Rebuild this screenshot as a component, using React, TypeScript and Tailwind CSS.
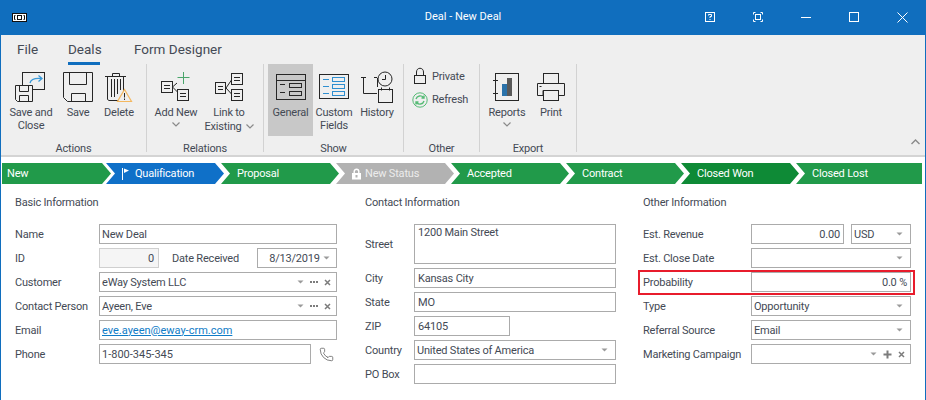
import React from 'react';
import { Phone } from 'lucide-react';

const ink = '#262626';

const Arrow = () => (
  <svg width="7" height="4" viewBox="0 0 7 4" className="shrink-0">
    <path d="M0.5 0.5H6.5L3.5 3.5Z" fill="#9a9a9a" />
  </svg>
);

const Dots = () => (
  <svg width="8" height="2" viewBox="0 0 8 2" className="shrink-0">
    <path d="M0 0h2v2H0zM3 0h2v2H3zM6 0h2v2H6z" fill="#7c7c7c" />
  </svg>
);

const Cross = () => (
  <svg width="7" height="7" viewBox="0 0 7 7" className="shrink-0">
    <path d="M1 1L6 6M6 1L1 6" stroke="#7c7c7c" strokeWidth="1.5" fill="none" />
  </svg>
);

const Plus = () => (
  <svg width="9" height="9" viewBox="0 0 9 9" className="shrink-0">
    <path d="M4.5 0.5V8.5M0.5 4.5H8.5" stroke="#7c7c7c" strokeWidth="2" fill="none" />
  </svg>
);

const Caret = () => (
  <svg width="8" height="5" viewBox="0 0 8 5" className="inline-block">
    <path d="M0.5 0.5L4 4L7.5 0.5" stroke="#8a8a8a" strokeWidth="1.2" fill="none" />
  </svg>
);

const Box = ({ className = 'flex-1', bg = 'bg-white border-[#ababab]', children }: { className?: string; bg?: string; children?: React.ReactNode }) => (
  <div className={`h-5 border flex items-center px-[2px] min-w-0 overflow-hidden whitespace-nowrap ${bg} ${className}`}>
    {children}
  </div>
);

const Label = ({ children }: { children?: React.ReactNode }) => <span className="relative top-[1px] flex-1 flex items-center">{children}</span>;

const Row = ({ label, children, width = 'w-[84px]' }: { label: string; children: React.ReactNode; width?: string }) => (
  <div className="flex items-center h-5">
    <div className={`shrink-0 whitespace-nowrap relative top-[1px] ${width}`}>{label}</div>
    {children}
  </div>
);

const Dropdown = ({ text }: { text?: string }) => (
  <Box>
    <Label>{text}</Label>
    <span className="mr-[5px] flex"><Arrow /></span>
  </Box>
);

const Lookup = ({ text }: { text: string }) => (
  <Box>
    <Label>{text}</Label>
    <span className="flex items-center gap-[6px] mr-[3px]"><Arrow /><Dots /><Cross /></span>
  </Box>
);

const RibbonButton = ({ w, lines, caret, sideCaret, active, children }: { w: string; lines: string[]; caret?: boolean; sideCaret?: boolean; active?: boolean; children: React.ReactNode }) => (
  <div className={`flex flex-col items-center h-[72px] pt-[5px] ${w} ${active ? 'bg-[#c8c8c8]' : ''}`}>
    <div className="h-[36px] flex items-center justify-center">{children}</div>
    <div className="mt-[1px] text-center leading-[13px] whitespace-nowrap">
      {lines.map((line, i) => (
        <div key={line}>
          {line}
          {sideCaret && i === lines.length - 1 && <span className="ml-[4px] align-[1px]"><Caret /></span>}
        </div>
      ))}
      {caret && <div className="flex justify-center mt-[3px]"><Caret /></div>}
    </div>
  </div>
);

const Group = ({ label, w, children, pad = '' }: { label: string; w: string; children: React.ReactNode; pad?: string }) => (
  <div className={`flex flex-col h-[88px] border-r border-[#d2d2d2] ${w}`}>
    <div className={`flex h-[72px] shrink-0 ${pad}`}>{children}</div>
    <div className="h-4 shrink-0 pt-[7px] leading-[12px] text-center">{label}</div>
  </div>
);

const stages = [
  { name: 'New', color: 'bg-[#219a4a]' },
  { name: 'Qualification', color: 'bg-[#0f70c8]', icon: 'flag' },
  { name: 'Proposal', color: 'bg-[#219a4a]' },
  { name: 'New Status', color: 'bg-[#b2b2b2]', icon: 'lock' },
  { name: 'Accepted', color: 'bg-[#219a4a]' },
  { name: 'Contract', color: 'bg-[#219a4a]' },
  { name: 'Closed Won', color: 'bg-[#0e8a36]' },
  { name: 'Closed Lost', color: 'bg-[#219a4a]' },
];

const App = () => {
  return (
    <div className="w-[926px] h-[400px] overflow-hidden bg-white text-[11px] tracking-[-0.2px] text-[#444a55] font-['Roboto','Noto_Sans',sans-serif]">
      {/* Title bar */}
      <div className="h-[35px] bg-[#106ebe] grid grid-cols-[1fr_auto_1fr] items-center text-white">
        <div className="pl-[12px]">
          <svg width="15" height="9" viewBox="0 0 15 9" className="block">
            <rect x="0.5" y="0.5" width="14" height="8" fill="#fff" stroke="#111" />
            <path d="M3.5 2.5H2.5V6.5H3.5M11.5 2.5H12.5V6.5H11.5" stroke="#111" fill="none" />
            <rect x="5.5" y="2.5" width="4" height="4" fill="none" stroke="#111" />
          </svg>
        </div>
        <div className="tracking-normal">Deal - New Deal</div>
        <div className="flex justify-end">
          <div className="w-12 flex justify-center">
            <svg width="10" height="10" viewBox="0 0 10 10">
              <rect x="0.5" y="0.5" width="9" height="9" fill="none" stroke="#fff" />
              <path d="M3.5 3.5V2.5H6.5V4.5H5V6M5 7V8" stroke="#fff" fill="none" />
            </svg>
          </div>
          <div className="w-12 flex justify-center">
            <svg width="10" height="10" viewBox="0 0 10 10">
              <path d="M0.5 2.5V0.5H2.5M7.5 0.5H9.5V2.5M9.5 7.5V9.5H7.5M2.5 9.5H0.5V7.5" stroke="#fff" fill="none" />
              <rect x="2.5" y="2.5" width="5" height="5" fill="none" stroke="#fff" />
            </svg>
          </div>
          <div className="w-12 flex justify-center">
            <svg width="10" height="10" viewBox="0 0 10 10"><path d="M0 5.5H10" stroke="#fff" /></svg>
          </div>
          <div className="w-12 flex justify-center">
            <svg width="10" height="10" viewBox="0 0 10 10"><rect x="0.5" y="0.5" width="9" height="9" fill="none" stroke="#fff" /></svg>
          </div>
          <div className="w-12 flex justify-center">
            <svg width="11" height="11" viewBox="0 0 11 11"><path d="M0.5 0.5L10.5 10.5M10.5 0.5L0.5 10.5" stroke="#fff" fill="none" /></svg>
          </div>
        </div>
      </div>

      <div className="h-[365px] border-x border-[#106ebe]">
        {/* Ribbon */}
        <div className="relative h-[122px] bg-[#efefef] border-b-2 border-[#d4d4d4]">
          <div className="flex h-[29px] items-start pt-[5px] text-[13.5px] tracking-normal leading-[19px]">
            <div className="ml-[16px] w-[18px]">File</div>
            <div className="ml-[33px] w-[32px] text-center border-b-[3px] border-[#106ebe] h-[25px]">Deals</div>
            <div className="ml-[34px]">Form Designer</div>
          </div>
          <div className="flex items-start">
            {/* Actions */}
            <Group label="Actions" w="w-[146px]" pad="pl-[4px]">
              <RibbonButton w="w-[52px]" lines={['Save and', 'Close']}>
                <svg width="36" height="34" viewBox="13 68 36 34">
                  <rect x="22.5" y="70.5" width="22" height="17" fill="none" stroke={ink} />
                  <path d="M30 81C31 77 35 76 41 76.5M38.5 73.5L42 76.5L38.5 79.5" fill="none" stroke="#3a9ad9" strokeWidth="1.3" />
                  <path d="M15.5 83.5H32.5V99.5H17.5L15.5 97.5Z" fill="#efefef" stroke={ink} />
                  <path d="M19.5 84V89.5H28.5V84M19.5 99V93.5H28.5V99" fill="none" stroke={ink} />
                </svg>
              </RibbonButton>
              <RibbonButton w="w-[42px]" lines={['Save']}>
                <svg width="32" height="32" viewBox="63 69 32 32">
                  <path d="M64.5 70.5H93.5V99.5H68.5L64.5 95.5Z" fill="none" stroke={ink} />
                  <path d="M70.5 71V82.5H87.5V71M72.5 99V91.5H86.5V99" fill="none" stroke={ink} />
                </svg>
              </RibbonButton>
              <RibbonButton w="w-[40px]" lines={['Delete']}>
                <svg width="32" height="32" viewBox="108 69 32 32">
                  <path d="M110 74.5H131M117.5 74V71.5H124.5V74M112.5 75V97.5L114 98.5H124M128.5 75V90" fill="none" stroke={ink} />
                  <path d="M116.5 77V95M119.5 77V95M122.5 77V92M125.5 77V88" fill="none" stroke={ink} />
                  <path d="M129.5 87.5L136.5 99.5H122.5Z" fill="#efefef" stroke="#f4b860" strokeWidth="1.2" />
                  <path d="M129.5 91V95.5M129.5 96.5V98" stroke={ink} />
                </svg>
              </RibbonButton>
            </Group>
            {/* Relations */}
            <Group label="Relations" w="w-[117px]" pad="pl-[3px]">
              <RibbonButton w="w-[52px]" lines={['Add New']} caret>
                <svg width="32" height="32" viewBox="160 69 32 32">
                  <path d="M183.5 70V82M177.5 75.5H189.5" stroke="#4aa56b" fill="none" />
                  <rect x="161.5" y="79.5" width="11" height="11" fill="none" stroke={ink} />
                  <rect x="177.5" y="87.5" width="11" height="11" fill="none" stroke={ink} />
                  <path d="M164 83.5H170M164 86.5H170M180 91.5H186M180 94.5H186M172.5 85L177 81M172.5 85L177.5 90" stroke={ink} fill="none" />
                </svg>
              </RibbonButton>
              <RibbonButton w="w-[54px]" lines={['Link to', 'Existing']} sideCaret>
                <svg width="32" height="32" viewBox="213 69 32 32">
                  <rect x="215.5" y="80.5" width="10" height="11" fill="none" stroke={ink} />
                  <rect x="231.5" y="71.5" width="11" height="11" fill="none" stroke={ink} />
                  <rect x="231.5" y="87.5" width="11" height="11" fill="none" stroke={ink} />
                  <path d="M218 84.5H223M218 87.5H223M234 75.5H240M234 78.5H240M234 91.5H240M234 94.5H240M226 86L231.5 78M226 86L231.5 92" stroke={ink} fill="none" />
                </svg>
              </RibbonButton>
            </Group>
            {/* Show */}
            <Group label="Show" w="w-[140px]" pad="pl-[4px]">
              <RibbonButton w="w-[45px]" lines={['General']} active>
                <svg width="32" height="28" viewBox="274 71 32 28">
                  <rect x="275.5" y="72.5" width="29" height="25" fill="none" stroke={ink} />
                  <path d="M276 78.5H304M279 82.5H284M279 90.5H284" stroke={ink} fill="none" />
                  <rect x="288.5" y="81.5" width="12" height="4" fill="none" stroke={ink} />
                  <rect x="288.5" y="89.5" width="12" height="4" fill="none" stroke={ink} />
                </svg>
              </RibbonButton>
              <RibbonButton w="w-[42px]" lines={['Custom', 'Fields']}>
                <svg width="32" height="28" viewBox="319 71 32 28">
                  <rect x="320.5" y="72.5" width="29" height="24" fill="none" stroke={ink} />
                  <path d="M324 77.5H330M324 84.5H330M324 91.5H330" stroke="#2f8fd0" fill="none" />
                  <rect x="333.5" y="75.5" width="12" height="4" fill="none" stroke="#2f8fd0" />
                  <rect x="333.5" y="82.5" width="12" height="4" fill="none" stroke="#2f8fd0" />
                  <rect x="333.5" y="89.5" width="12" height="4" fill="none" stroke="#2f8fd0" />
                </svg>
              </RibbonButton>
              <RibbonButton w="w-[44px]" lines={['History']}>
                <svg width="34" height="34" viewBox="361 68 34 34">
                  <path d="M362 75.5H367M375 75.5H378M364.5 75.5V91.5H378M378.5 76V85" stroke={ink} fill="none" />
                  <circle cx="386" cy="77" r="7" fill="#efefef" stroke={ink} />
                  <path d="M386.5 73V77.5H383" stroke={ink} fill="none" />
                  <rect x="379.5" y="87.5" width="14" height="13" fill="#efefef" stroke={ink} />
                  <path d="M382.5 85.5V88.5M390.5 85.5V88.5" stroke={ink} />
                </svg>
              </RibbonButton>
            </Group>
            {/* Other */}
            <Group label="Other" w="w-[76px]">
              <div className="flex flex-col pl-[8px]">
                <div className="flex items-center h-[24px]">
                  <div className="w-[20px] flex">
                    <svg width="16" height="18" viewBox="412 67 16 18" className="block">
                      <rect x="414.5" y="75.5" width="11" height="8" fill="none" stroke={ink} />
                      <path d="M416.5 75V72C416.5 67 423.5 67 423.5 72V75" fill="none" stroke={ink} />
                    </svg>
                  </div>
                  <span className="relative top-[1px]">Private</span>
                </div>
                <div className="flex items-center h-[23px]">
                  <div className="w-[20px] flex">
                    <svg width="16" height="16" viewBox="411 91 16 16" className="block">
                      <circle cx="419" cy="99" r="7.2" fill="none" stroke="#57bb76" />
                      <path d="M415 98C416 94.5 420.5 94 422.5 96.5M423 94.5V97H420.5M423 100C422 103.5 417.5 104 415.5 101.5M415 103.5V101H417.5" fill="none" stroke="#57bb76" strokeWidth="1.4" />
                    </svg>
                  </div>
                  <span className="relative top-[1px]">Refresh</span>
                </div>
              </div>
            </Group>
            {/* Export */}
            <Group label="Export" w="w-[97px]" pad="pl-[2px]">
              <RibbonButton w="w-[50px]" lines={['Reports']} caret>
                <svg width="30" height="32" viewBox="493 69 30 32">
                  <rect x="496.5" y="71.5" width="23" height="27" fill="none" stroke={ink} />
                  <path d="M494 78.5H499M494 91.5H499" stroke={ink} />
                  <rect x="503" y="82" width="5" height="12" fill="#2a72aa" />
                  <rect x="508" y="76" width="5" height="18" fill="#595959" />
                </svg>
              </RibbonButton>
              <RibbonButton w="w-[38px]" lines={['Print']}>
                <svg width="30" height="32" viewBox="536 69 30 32">
                  <rect x="543.5" y="71.5" width="15" height="10" fill="none" stroke={ink} />
                  <path d="M543 88.5V93.5H537.5V81.5H564.5V93.5H559" fill="#efefef" stroke={ink} />
                  <rect x="543.5" y="88.5" width="15" height="10" fill="#efefef" stroke={ink} />
                  <path d="M539.5 84.5H541.5" stroke={ink} />
                </svg>
              </RibbonButton>
            </Group>
          </div>
          <span className="absolute right-[5px] bottom-[10px]">
            <svg width="9" height="6" viewBox="0 0 9 6" className="block">
              <path d="M0.5 5L4.5 1L8.5 5" stroke="#8a8a8a" strokeWidth="1.4" fill="none" />
            </svg>
          </span>
        </div>

        {/* Stage bar */}
        <div className="flex h-[21px] mt-[6px] ml-[1px] mr-[3px] text-white">
          {stages.map((stage, i) => (
            <div
              key={stage.name}
              className={`flex items-center h-full shrink-0 ${stage.color} ${
                i === 0
                  ? 'w-[109px] pl-[5px] [clip-path:polygon(0_0,100px_0,100%_50%,100px_100%,0_100%)]'
                  : i === stages.length - 1
                    ? 'flex-1 shrink -ml-[3px] pl-[16px] [clip-path:polygon(0_0,100%_0,100%_100%,0_100%,9px_50%)]'
                    : `w-[118px] pl-[16px] [clip-path:polygon(0_0,109px_0,100%_50%,109px_100%,0_100%,9px_50%)] ${i === 1 ? '-ml-[5px]' : '-ml-[3px]'}`
              }`}
            >
              {stage.icon === 'flag' && (
                <svg width="9" height="12" viewBox="0 0 9 12" className="mr-[4px]">
                  <path d="M0.5 0V12" stroke="#fff" />
                  <path d="M2 0.5L7 2.5L2 5Z" fill="#fff" />
                </svg>
              )}
              {stage.icon === 'lock' && (
                <svg width="9" height="12" viewBox="0 0 9 12" className="mr-[4px]">
                  <path d="M2.2 5V3.5C2.2 0.5 6.8 0.5 6.8 3.5V5" stroke="#fff" strokeWidth="1.4" fill="none" />
                  <path d="M0 5H9V11.5H0ZM3.5 7V9.5H5.5V7Z" fill="#fff" fillRule="evenodd" />
                </svg>
              )}
              <span className={`relative top-[1px] ${stage.icon === 'lock' ? 'text-[#ececec]' : ''}`}>{stage.name}</span>
            </div>
          ))}
        </div>

        {/* Form */}
        <div className="flex pl-[14px] mt-[11px]">
          <div className="w-[322px]">
            <div className="h-4 leading-4 mb-[13px]">Basic Information</div>
            <div className="flex flex-col gap-1">
              <Row label="Name"><Box><Label>New Deal</Label></Box></Row>
              <Row label="ID">
                <Box className="w-[60px] pr-[4px]" bg="bg-[#f5f5f5] border-[#cfcfcf]"><Label><span className="ml-auto">0</span></Label></Box>
                <div className="w-[98px] pl-[13px] relative top-[1px] whitespace-nowrap">Date Received</div>
                <Box className="w-[80px]">
                  <Label><span className="flex-1 text-center pl-[6px]">8/13/2019</span></Label>
                  <span className="mr-[4px] flex"><Arrow /></span>
                </Box>
              </Row>
              <Row label="Customer"><Lookup text="eWay System LLC" /></Row>
              <Row label="Contact Person"><Lookup text="Ayeen, Eve" /></Row>
              <Row label="Email"><Box className="flex-1 tracking-normal"><Label><span className="text-[#0f7cc7] underline">eve.ayeen@eway-crm.com</span></Label></Box></Row>
              <Row label="Phone">
                <Box className="w-[212px] flex-none tracking-normal"><Label>1-800-345-345</Label></Box>
                <Phone size={15} strokeWidth={1.2} className="ml-[8px] text-[#555555]" />
              </Row>
            </div>
          </div>

          <div className="w-[251px] ml-[28px]">
            <div className="h-4 leading-4 mb-[13px]">Contact Information</div>
            <div className="flex flex-col gap-1">
              <div className="flex items-center h-10">
                <div className="w-[49px] shrink-0 relative top-[1px]">Street</div>
                <div className="flex-1 h-10 border border-[#ababab] px-[3px] pt-[1px] leading-[14px]">1200 Main Street</div>
              </div>
              <Row label="City" width="w-[49px]"><Box className="flex-1 !px-[3px]"><Label>Kansas City</Label></Box></Row>
              <Row label="State" width="w-[49px]"><Box className="flex-1 !px-[3px]"><Label>MO</Label></Box></Row>
              <Row label="ZIP" width="w-[49px]"><Box className="w-[96px] !px-[3px]"><Label>64105</Label></Box></Row>
              <Row label="Country" width="w-[49px]"><Dropdown text="United States of America" /></Row>
              <Row label="PO Box" width="w-[49px]"><Box /></Row>
            </div>
          </div>

          <div className="w-[268px] ml-[27px]">
            <div className="h-4 leading-4 mb-[13px]">Other Information</div>
            <div className="flex flex-col gap-1">
              <Row label="Est. Revenue" width="w-[108px]">
                <Box className="w-[93px] pr-[3px]"><Label><span className="ml-auto">0.00</span></Label></Box>
                <div className="w-[7px]" />
                <Dropdown text="USD" />
              </Row>
              <Row label="Est. Close Date" width="w-[108px]"><Dropdown /></Row>
              <div className="relative">
                <Row label="Probability" width="w-[108px]">
                  <Box className="flex-1 pr-[3px]"><Label><span className="ml-auto">0.0 %</span></Label></Box>
                </Row>
                <div className="absolute left-[-5px] right-[-4px] top-[-2px] bottom-[-3px] border-2 border-[#e81c2c]" />
              </div>
              <Row label="Type" width="w-[108px]"><Dropdown text="Opportunity" /></Row>
              <Row label="Referral Source" width="w-[108px]"><Dropdown text="Email" /></Row>
              <Row label="Marketing Campaign" width="w-[108px]">
                <Box>
                  <span className="flex-1" />
                  <span className="flex items-center gap-[6px] mr-[3px]"><Arrow /><Plus /><Cross /></span>
                </Box>
              </Row>
            </div>
          </div>
        </div>
      </div>
    </div>
  );
};

export default App;
